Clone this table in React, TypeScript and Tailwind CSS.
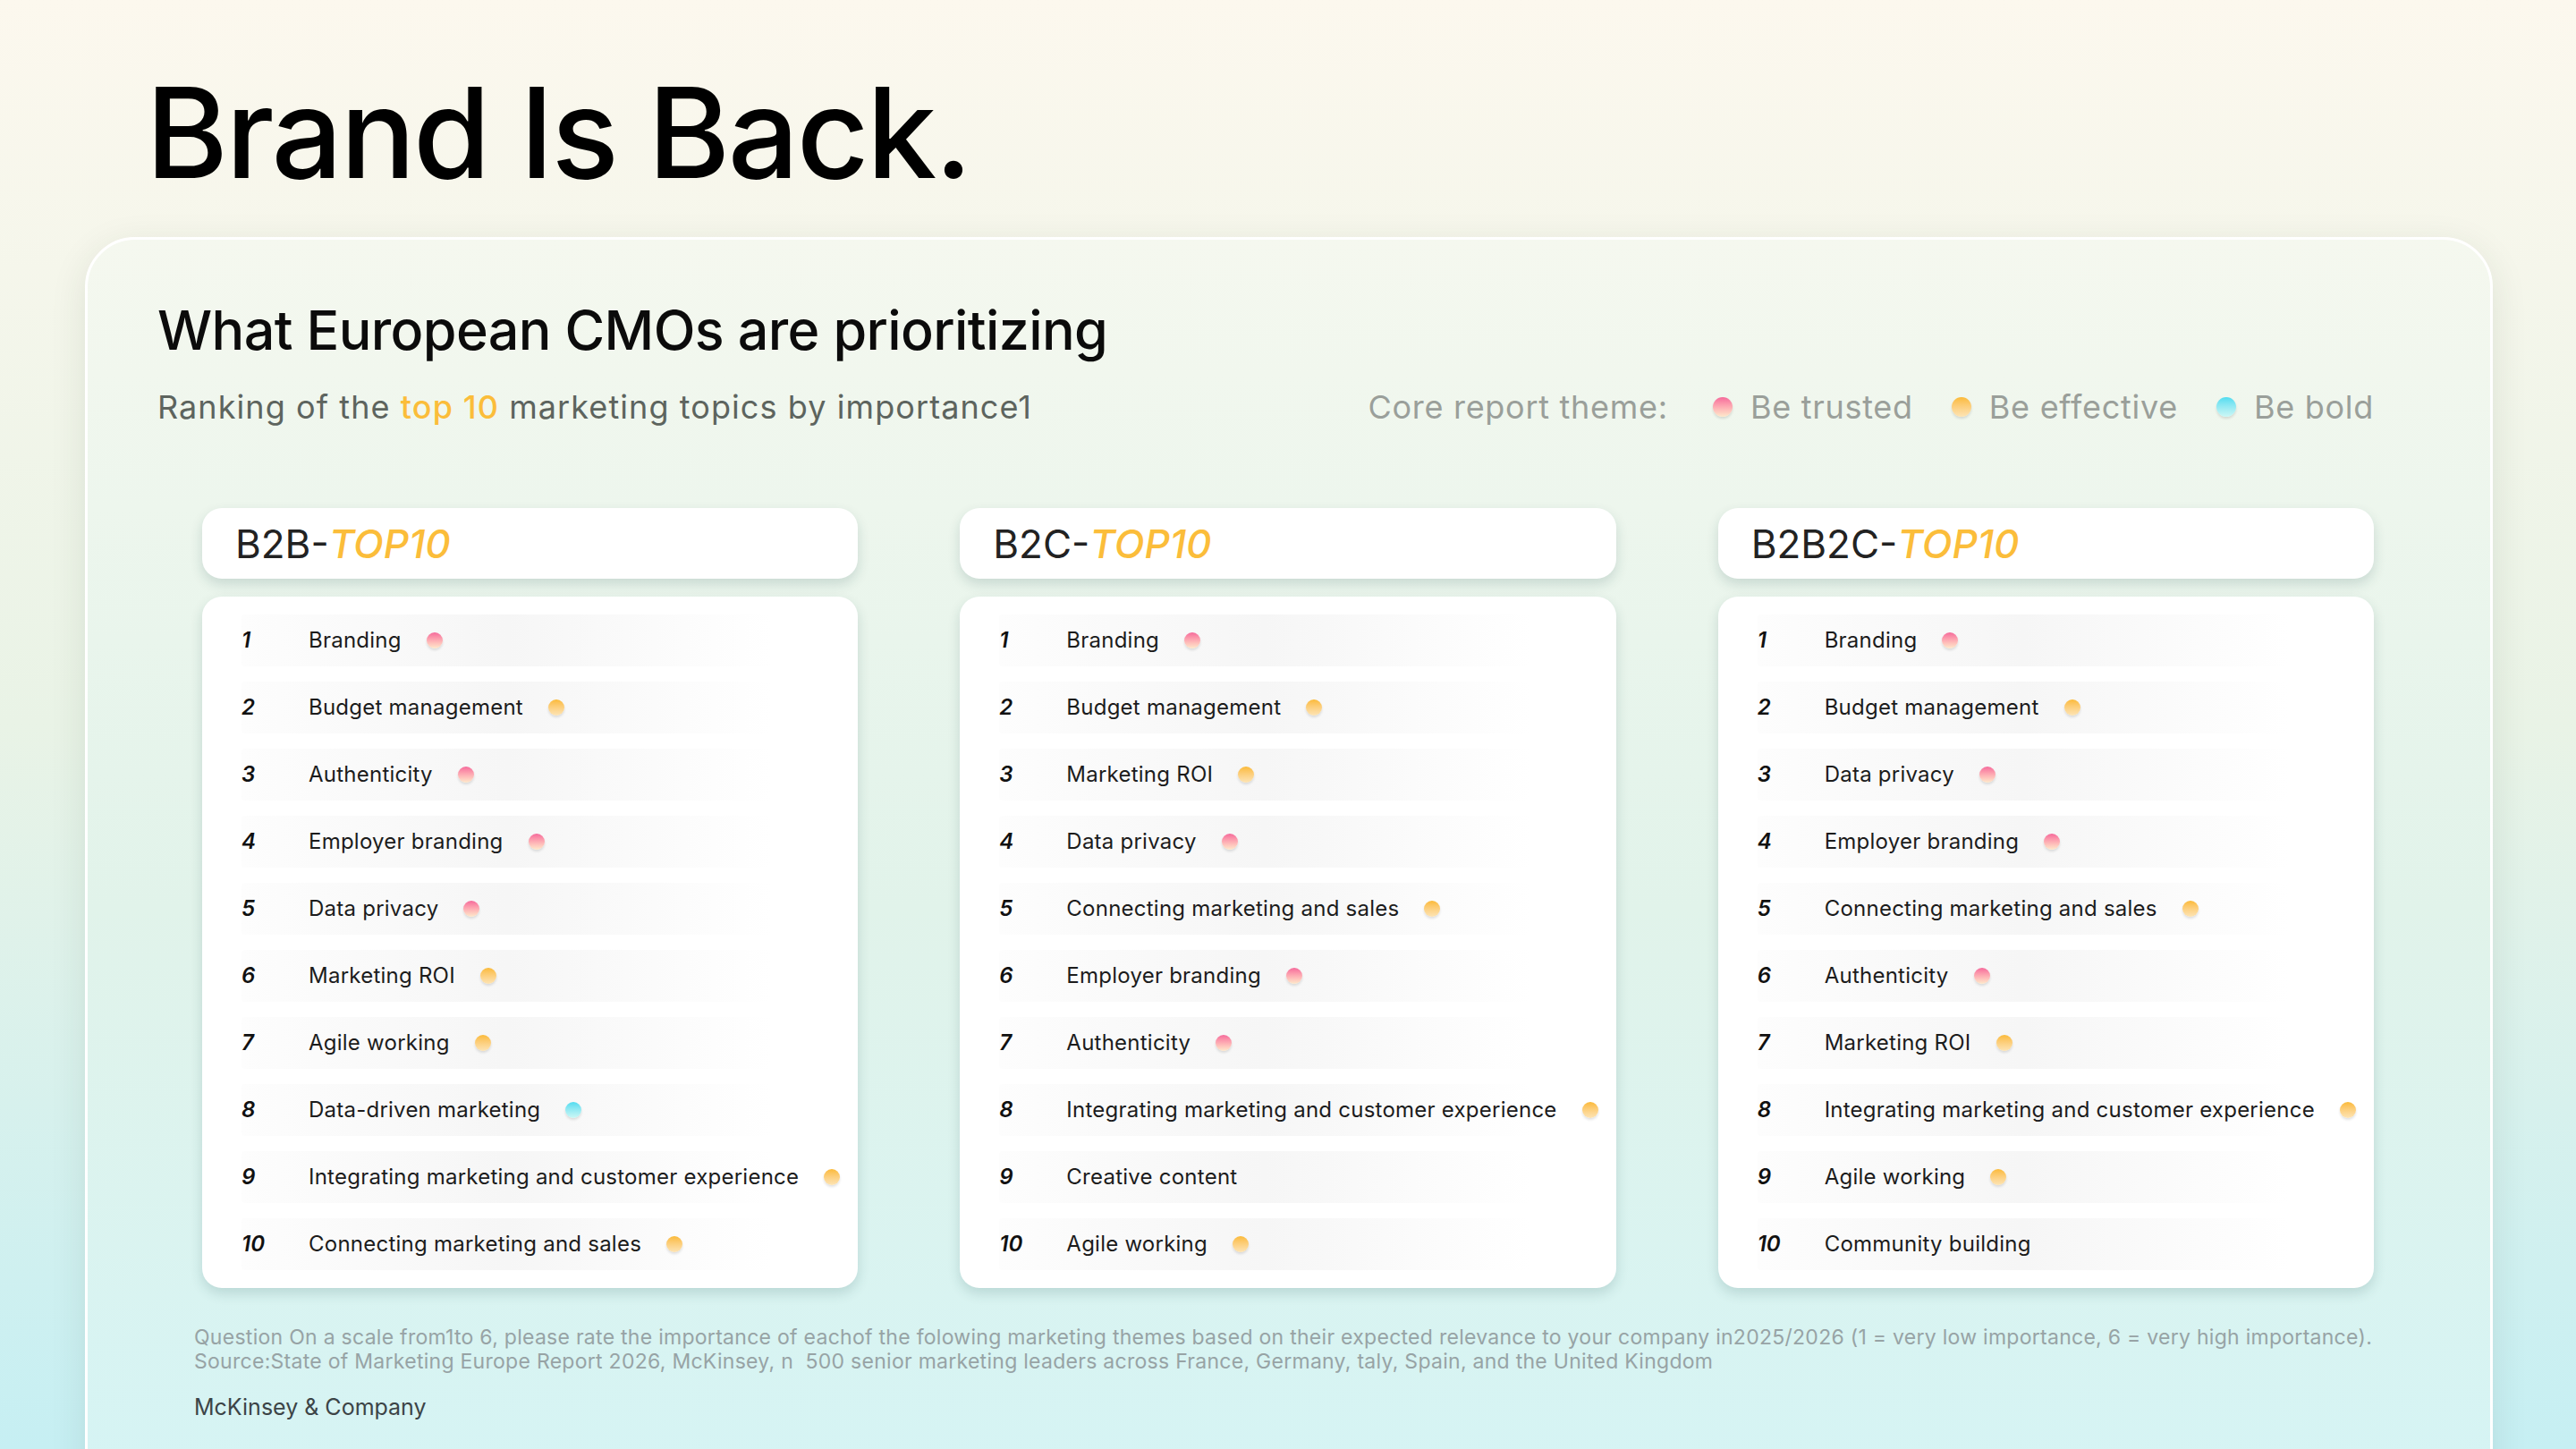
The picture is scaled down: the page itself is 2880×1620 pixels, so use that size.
import React from 'react';

type Theme = 'trusted' | 'effective' | 'bold' | null;

const dotClass: Record<string, string> = {
  trusted: 'bg-gradient-to-b from-[#f5699b] to-[#fde9cb]',
  effective: 'bg-gradient-to-b from-[#fbba35] to-[#fde4b4]',
  bold: 'bg-gradient-to-b from-[#4edcf0] to-[#cbf7f5]',
};

const columns: { name: string; items: [string, Theme][] }[] = [
  {
    name: 'B2B',
    items: [
      ['Branding', 'trusted'],
      ['Budget management', 'effective'],
      ['Authenticity', 'trusted'],
      ['Employer branding', 'trusted'],
      ['Data privacy', 'trusted'],
      ['Marketing ROI', 'effective'],
      ['Agile working', 'effective'],
      ['Data-driven marketing', 'bold'],
      ['Integrating marketing and customer experience', 'effective'],
      ['Connecting marketing and sales', 'effective'],
    ],
  },
  {
    name: 'B2C',
    items: [
      ['Branding', 'trusted'],
      ['Budget management', 'effective'],
      ['Marketing ROI', 'effective'],
      ['Data privacy', 'trusted'],
      ['Connecting marketing and sales', 'effective'],
      ['Employer branding', 'trusted'],
      ['Authenticity', 'trusted'],
      ['Integrating marketing and customer experience', 'effective'],
      ['Creative content', null],
      ['Agile working', 'effective'],
    ],
  },
  {
    name: 'B2B2C',
    items: [
      ['Branding', 'trusted'],
      ['Budget management', 'effective'],
      ['Data privacy', 'trusted'],
      ['Employer branding', 'trusted'],
      ['Connecting marketing and sales', 'effective'],
      ['Authenticity', 'trusted'],
      ['Marketing ROI', 'effective'],
      ['Integrating marketing and customer experience', 'effective'],
      ['Agile working', 'effective'],
      ['Community building', null],
    ],
  },
];

const Dot = ({ theme, size = 'row' }: { theme: Exclude<Theme, null>; size?: 'row' | 'legend' }) => (
  <span
    className={`${dotClass[theme]} inline-block shrink-0 rounded-full shadow-[0_2px_3px_rgba(0,0,0,0.12)] ${
      size === 'row' ? 'w-[18px] h-[18px]' : 'w-[22px] h-[22px]'
    }`}
  />
);

const RankColumn = ({ name, items }: { name: string; items: [string, Theme][] }) => (
  <div className="flex flex-col gap-[20px]">
    <div className="h-[79px] flex items-center pl-[37px] bg-white rounded-[22px] shadow-[0_6px_14px_rgba(20,70,70,0.16)]">
      <span className="text-[44px] leading-none text-[#222]">
        {name}-<span className="italic font-medium text-[#fbbd3a]">TOP10</span>
      </span>
    </div>
    <div className="bg-white rounded-[22px] shadow-[0_6px_14px_rgba(20,70,70,0.16)] pt-[20px] pb-[20px] pl-[44px] pr-[10px] flex flex-col gap-[17px]">
      {items.map(([label, theme], i) => (
        <div
          key={label}
          className="h-[58px] flex items-center bg-gradient-to-r from-[#fdfdfd] via-[#f6f6f6] to-white rounded-[4px] mr-[86px]"
        >
          <span className="w-[75px] shrink-0 italic font-semibold text-[24px] leading-none text-[#111]">{i + 1}</span>
          <span className="text-[24px] leading-none tracking-[0.01em] text-[#1c1c1c] whitespace-nowrap">{label}</span>
          {theme && (
            <span className="ml-[28px] flex">
              <Dot theme={theme} />
            </span>
          )}
        </div>
      ))}
    </div>
  </div>
);

const App = () => {
  return (
    <div
      className="w-[2880px] h-[1620px] overflow-hidden bg-gradient-to-b from-[#fcf8ee] via-[#e9f3e6] to-[#c6eff3]"
      style={{ fontFamily: 'Inter, "Noto Sans", sans-serif' }}
    >
      <h1 className="pt-[78px] pl-[163px] text-[140px] leading-none font-medium tracking-[-0.018em] text-black">
        Brand Is Back.
      </h1>

      <div className="mt-[47px] ml-[95px] w-[2692px] h-[1500px] rounded-[56px] border-[3px] border-white bg-gradient-to-b from-[#f5f8ef] via-[#e1f3ea] to-[#d3f4f6] shadow-[0_10px_40px_rgba(40,60,40,0.10)]">
        <div className="pt-[71px] pl-[78px] pr-[130px]">
          <h2 className="text-[61px] leading-none font-medium tracking-[-0.01em] text-[#0b0b0b]">
            What European CMOs are prioritizing
          </h2>
          <div className="mt-[37px] flex items-baseline justify-between text-[36px] leading-none tracking-[0.03em]">
            <p className="text-[#5d645e]">
              Ranking of the <span className="text-[#fbbd3a] font-medium">top 10</span> marketing topics by importance1
            </p>
            <div className="flex items-center text-[#9a9f9a] tracking-[0.02em]">
              <span>Core report theme:</span>
              <span className="ml-[50px] flex items-center gap-[20px]">
                <Dot theme="trusted" size="legend" />
                Be trusted
              </span>
              <span className="ml-[43px] flex items-center gap-[20px]">
                <Dot theme="effective" size="legend" />
                Be effective
              </span>
              <span className="ml-[43px] flex items-center gap-[20px]">
                <Dot theme="bold" size="legend" />
                Be bold
              </span>
            </div>
          </div>
        </div>

        <div className="mt-[95px] pl-[128px] pr-[130px] grid grid-cols-3 gap-x-[114px]">
          {columns.map((c) => (
            <RankColumn key={c.name} name={c.name} items={c.items} />
          ))}
        </div>

        <div className="mt-[42px] pl-[119px] text-[23px] leading-[27px] tracking-[0.012em] text-[#97a3a5]">
          <p>
            Question On a scale from1to 6, please rate the importance of eachof the folowing marketing themes based on their
            expected relevance to your company in2025/2026 (1 = very low importance, 6 = very high importance).
          </p>
          <p>Source:State of Marketing Europe Report 2026, McKinsey, n&nbsp; 500 senior marketing leaders across France, Germany, taly, Spain, and the United Kingdom</p>
          <p className="mt-[25px] text-[25px] leading-none tracking-normal text-[#3c4447]">McKinsey &amp; Company</p>
        </div>
      </div>
    </div>
  );
};

export default App;
